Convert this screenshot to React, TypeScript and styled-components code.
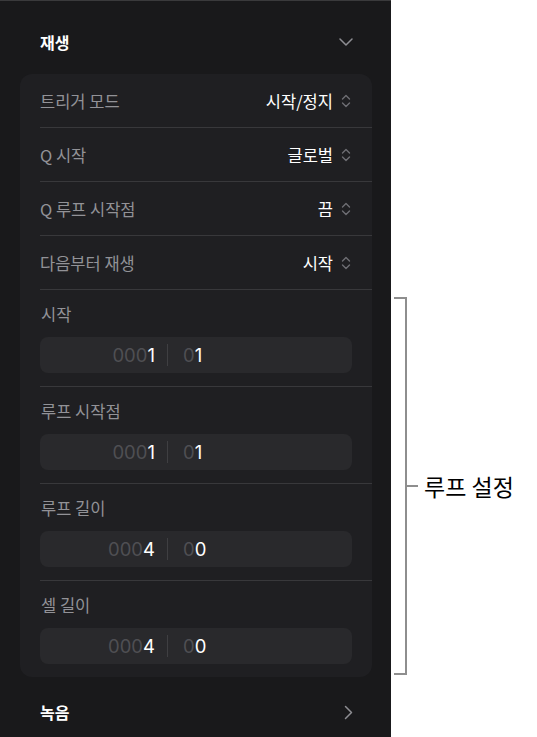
import React from 'react';
import styled, { createGlobalStyle } from 'styled-components';

const GlobalStyle = createGlobalStyle`
  html, body {
    margin: 0;
    padding: 0;
    background: #ffffff;
  }
  body {
    font-family: 'Noto Sans CJK KR', 'Noto Sans', 'Liberation Sans', sans-serif;
    -webkit-font-smoothing: antialiased;
  }
`;

const Page = styled.div`
  display: flex;
  align-items: flex-start;
  width: 537px;
  height: 737px;
  overflow: hidden;
  background: #ffffff;
`;

const Panel = styled.div`
  width: 391px;
  height: 737px;
  box-sizing: border-box;
  flex-shrink: 0;
  background: #19191b;
  border-top: 1px solid #3a3a3c;
  padding: 0 19px 0 20px;
`;

const SectionHeader = styled.div<{ $top: number; $bottom: number }>`
  display: flex;
  align-items: center;
  justify-content: space-between;
  height: 24px;
  padding: 0 19px 0 20px;
  margin: ${({ $top, $bottom }) => `${$top}px 0 ${$bottom}px`};
  color: #ffffff;
  font-size: 16px;
  font-weight: 700;
`;

const Card = styled.div`
  background: #1f1f22;
  border-radius: 12px;
  overflow: hidden;
`;

const SelectRow = styled.div`
  display: flex;
  align-items: center;
  justify-content: space-between;
  height: 53px;
  margin-left: 20px;
  padding-right: 21px;
  border-bottom: 1px solid #38383b;
`;

const RowLabel = styled.span`
  color: #929297;
  font-size: 16.5px;
`;

const RowValue = styled.span`
  display: flex;
  align-items: center;
  gap: 8px;
  color: #ffffff;
  font-size: 16.5px;
  font-weight: 400;
`;

const FieldSection = styled.div<{ $last?: boolean }>`
  display: flex;
  flex-direction: column;
  gap: 13px;
  margin-left: 20px;
  padding: 14px 20px 13px 0;
  border-bottom: ${({ $last }) => ($last ? 'none' : '1px solid #38383b')};
`;

const FieldLabel = styled.span`
  color: #929297;
  font-size: 16.5px;
  line-height: 20px;
  margin-left: 1px;
`;

const NumberBox = styled.div`
  display: flex;
  align-items: center;
  height: 36px;
  background: #29292c;
  border-radius: 8px;
  font-family: 'Inter', 'Noto Sans', sans-serif;
  font-size: 18.5px;
`;

const BarPart = styled.div`
  width: 115px;
  padding-right: 12px;
  text-align: right;
`;

const BeatPart = styled.div`
  padding-left: 15px;
`;

const Splitter = styled.div`
  width: 1px;
  height: 22px;
  background: #3f3f42;
`;

const Dim = styled.span`
  color: #4f4f53;
`;

const Bright = styled.span`
  color: #ffffff;
`;

const Annotation = styled.div`
  display: flex;
  align-items: center;
  margin-top: 297px;
  margin-left: 3px;
`;

const Bracket = styled.div`
  width: 11px;
  height: 374px;
  border: 2px solid #8e8e8e;
  border-left: none;
`;

const Tick = styled.div`
  width: 11px;
  height: 2px;
  background: #8e8e8e;
`;

const AnnotationLabel = styled.span`
  margin-left: 6px;
  color: #000000;
  font-size: 23px;
  white-space: nowrap;
`;

const ChevronDown = () => (
  <svg width="14" height="8" viewBox="0 0 14 8" fill="none">
    <path d="M1 1l6 6 6-6" stroke="#8e8e93" strokeWidth="1.5" strokeLinecap="round" strokeLinejoin="round" />
  </svg>
);

const ChevronRight = () => (
  <svg width="9" height="15" viewBox="0 0 9 15" fill="none">
    <path d="M1.5 1.5l6 6-6 6" stroke="#8e8e93" strokeWidth="1.5" strokeLinecap="round" strokeLinejoin="round" />
  </svg>
);

const UpDown = () => (
  <svg width="10" height="14" viewBox="0 0 10 14" fill="none">
    <path
      d="M1.5 5L5 1.5 8.5 5M1.5 9L5 12.5 8.5 9"
      stroke="#6e6e73"
      strokeWidth="1.4"
      strokeLinecap="round"
      strokeLinejoin="round"
    />
  </svg>
);

const selects = [
  { label: '트리거 모드', value: '시작/정지' },
  { label: 'Q 시작', value: '글로벌' },
  { label: 'Q 루프 시작점', value: '끔' },
  { label: '다음부터 재생', value: '시작' },
];

const positions = [
  { label: '시작', bar: ['000', '1'], beat: ['0', '1'] },
  { label: '루프 시작점', bar: ['000', '1'], beat: ['0', '1'] },
  { label: '루프 길이', bar: ['000', '4'], beat: ['0', '0'] },
  { label: '셀 길이', bar: ['000', '4'], beat: ['0', '0'] },
];

export default function App() {
  return (
    <Page>
      <GlobalStyle />
      <Panel>
        <SectionHeader $top={29} $bottom={20}>
          재생
          <ChevronDown />
        </SectionHeader>
        <Card>
          {selects.map((row) => (
            <SelectRow key={row.label}>
              <RowLabel>{row.label}</RowLabel>
              <RowValue>
                {row.value}
                <UpDown />
              </RowValue>
            </SelectRow>
          ))}
          {positions.map((field, i) => (
            <FieldSection key={field.label} $last={i === positions.length - 1}>
              <FieldLabel>{field.label}</FieldLabel>
              <NumberBox>
                <BarPart>
                  <Dim>{field.bar[0]}</Dim>
                  <Bright>{field.bar[1]}</Bright>
                </BarPart>
                <Splitter />
                <BeatPart>
                  <Dim>{field.beat[0]}</Dim>
                  <Bright>{field.beat[1]}</Bright>
                </BeatPart>
              </NumberBox>
            </FieldSection>
          ))}
        </Card>
        <SectionHeader $top={23} $bottom={0}>
          녹음
          <ChevronRight />
        </SectionHeader>
      </Panel>
      <Annotation>
        <Bracket />
        <Tick />
        <AnnotationLabel>루프 설정</AnnotationLabel>
      </Annotation>
    </Page>
  );
}
